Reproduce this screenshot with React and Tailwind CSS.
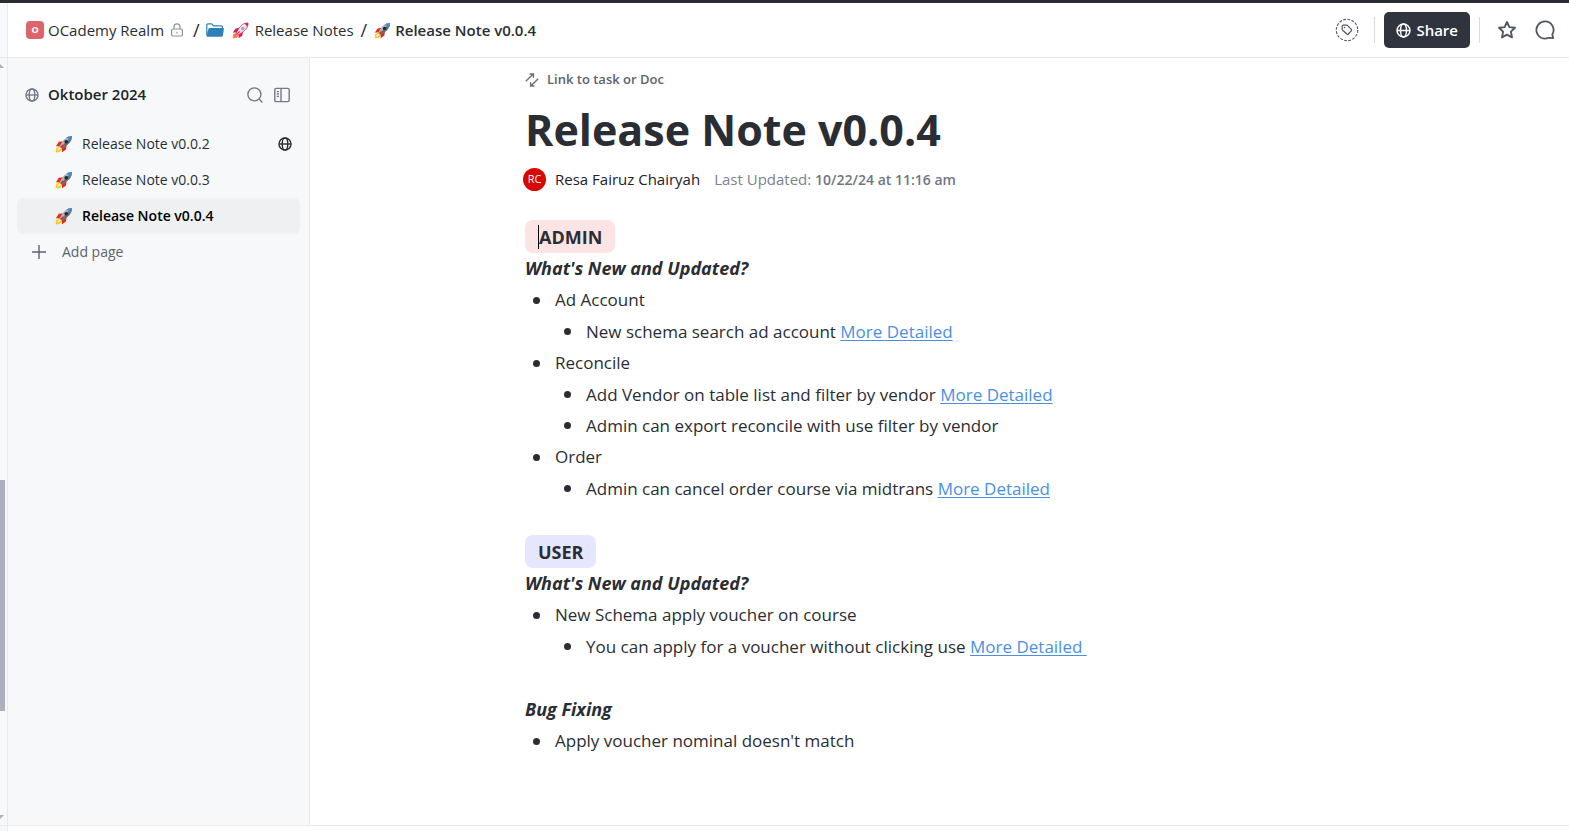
function Rocket({ className, variant = 'silver' }) {
  const pink = variant === 'pink';
  const body = pink ? '#f6eef3' : '#aeb6c1';
  const shade = pink ? '#f0a3b5' : '#4d545f';
  const nose = pink ? '#d3154b' : '#4a8ac8';
  const fin = pink ? '#dc1c50' : '#e62a18';
  return (
    <svg viewBox="0 0 18 18" className={className} aria-hidden="true">
      <path d="M5.6 10.6 1.2 13 .6 17.4 5 16.9 8 12.8Z" fill={pink ? '#f58a63' : '#fbc531'} />
      <path d="M4.8 12.2 2.6 13.8 2.4 15.8 4.6 15.2 6 13.4Z" fill={pink ? '#ff6a4d' : '#fff0a0'} />
      <path d="M8 6.2 3.8 6.8 .9 11.2 5.2 11.2Z" fill={fin} />
      <path d="M11.6 10 11 14.4 7 17.2 7 12.6Z" fill={fin} />
      <path d="M16.9 1.1C12.8.9 9.3 3.3 6.7 7.6L4.6 11.2 6.8 13.4 10.4 11.3C14.7 8.7 17.1 5.2 16.9 1.1Z" fill={body} stroke={pink ? '#d3154b' : 'none'} strokeWidth=".8" />
      <path d="M16.9 1.1C17.1 5.2 14.7 8.7 10.4 11.3L6.8 13.4 5.7 12.3Z" fill={shade} opacity={pink ? '.4' : '.75'} />
      <path
        d={pink ? 'M17 1C15.6 1 14.4 1.2 13.3 1.7L16.3 4.7C16.8 3.6 17 2.4 17 1Z' : 'M16.9 1.1C15 1 13.3 1.5 11.7 2.5L15.5 6.3C16.5 4.7 17 3 16.9 1.1Z'}
        fill={nose}
      />
      <circle cx="11.2" cy="6.8" r="1.8" fill={pink ? '#7fb4dc' : '#20242b'} />
      <path d="M7.6 9.6 5.2 11.8 6.2 12.8 8.4 10.4Z" fill={fin} />
    </svg>
  );
}

function Globe({ className }) {
  return (
    <svg viewBox="0 0 16 16" className={className} fill="none" stroke="currentColor" strokeWidth="1.6" aria-hidden="true">
      <circle cx="8" cy="8" r="6.9" />
      <ellipse cx="8" cy="8" rx="3.2" ry="6.9" />
      <path d="M1.3 8h13.4" />
    </svg>
  );
}

function Folder() {
  return (
    <svg viewBox="0 0 18 14" className="h-[14px] w-[18px]" aria-hidden="true">
      <path d="M.8 12V1.8Q.8.8 1.8.8H5.6L7.4 2.8H15.2Q16.4 2.8 16.4 4V5" fill="none" stroke="#2f80b9" strokeWidth="1.2" />
      <path d="M3.6 5H17.2Q18 5 17.9 5.8L16.9 12.6Q16.7 13.8 15.5 13.8H1.6Q.4 13.8.6 12.6L2.4 6Q2.6 5 3.6 5Z" fill="#2f80b9" />
    </svg>
  );
}

function Lock() {
  return (
    <svg viewBox="0 0 14 14" className="size-[14px]" fill="none" stroke="#8b919c" strokeWidth="1.2" aria-label="Private">
      <rect x="1.6" y="6" width="10.8" height="7" rx="1.2" />
      <path d="M4 6V3.8a3 3 0 0 1 6 0V6" />
      <path d="M7 8.8v1.6" />
    </svg>
  );
}

function Tag() {
  return (
    <svg viewBox="0 0 24 24" className="size-6" fill="none" stroke="#4f5762" aria-hidden="true">
      <circle cx="12" cy="12" r="10.7" strokeWidth="1.1" strokeDasharray="2.8 1.4" />
      <path d="M7.2 8.2Q7.2 7.2 8.2 7.2H11.6Q12.2 7.2 12.6 7.6L16.3 11.4Q17 12.1 16.3 12.8L13.3 16Q12.6 16.7 11.9 16L7.6 12.2Q7.2 11.8 7.2 11.2Z" strokeWidth="1.2" />
      <circle cx="9.5" cy="9.5" r=".5" fill="#4f5762" strokeWidth=".6" />
    </svg>
  );
}

function Star() {
  return (
    <svg viewBox="0 0 20 20" className="size-5" fill="none" stroke="#4f5762" strokeWidth="1.9" strokeLinejoin="round" aria-hidden="true">
      <path d="M10 2 12.4 7.1 18 7.8 13.9 11.6 15 17.4 10 14.6 5 17.4 6.1 11.6 2 7.8 7.6 7.1Z" />
    </svg>
  );
}

function Chat() {
  return (
    <svg viewBox="0 0 20 20" className="size-5" fill="none" stroke="#4f5762" strokeWidth="1.8" strokeLinejoin="round" aria-hidden="true">
      <path d="M10 1.4A8.6 8.6 0 1 0 13.6 17.8L18.2 18.2 17.3 14.5A8.6 8.6 0 0 0 10 1.4Z" />
    </svg>
  );
}

function Search() {
  return (
    <svg viewBox="0 0 16 16" className="size-4" fill="none" stroke="currentColor" strokeWidth="1.4" aria-hidden="true">
      <circle cx="7.4" cy="7.4" r="6.5" />
      <path d="M12 12 15.4 15.4" />
    </svg>
  );
}

function Panel() {
  return (
    <svg viewBox="0 0 16 16" className="size-4" fill="none" stroke="currentColor" strokeWidth="1.4" aria-hidden="true">
      <rect x=".8" y="1.4" width="14.4" height="13.2" rx="1.4" />
      <path d="M7 1.4v13.2M2.8 4.6h2.2M2.8 7h2.2M2.8 9.4h2.2" />
    </svg>
  );
}

function LinkArrows() {
  return (
    <svg viewBox="0 0 14 14" className="size-[14px]" fill="none" stroke="#656f7d" strokeWidth="1.4" aria-hidden="true">
      <path d="M.8 8.2 8.2.9M4.6 1H8.4V4.8M13.2 5.8 5.8 13.1M5.6 9.2V13H9.4" />
    </svg>
  );
}

function More({ children = 'More Detailed' }) {
  return <a href="#details" className="whitespace-pre text-[#4a90e2] underline underline-offset-2">{children}</a>;
}

function Item({ children, nested }) {
  return (
    <li>
      <div className={nested ? 'flex items-center leading-[31px]' : 'flex items-center leading-8'}>
        <span className="mx-2 size-[7px] shrink-0 rounded-full bg-[#2a2e34]" />
        <span className="pl-[7px]">{children}</span>
      </div>
    </li>
  );
}

function Nested({ children }) {
  return <ul className="pl-[31px]">{children}</ul>;
}

function Subheading({ children }) {
  return <h3 className="text-lg leading-[31px] font-bold italic">{children}</h3>;
}

const pages = [
  { name: 'Release Note v0.0.2', shared: true },
  { name: 'Release Note v0.0.3' },
  { name: 'Release Note v0.0.4', active: true },
];

export default function App() {
  return (
    <div className="flex h-screen flex-col overflow-hidden border-t-[3px] border-[#2a2d34] bg-white font-['Open_Sans',sans-serif] text-[#2a2e34]">
      <div className="flex min-h-0 flex-1">
        <div className="flex w-2 shrink-0 flex-col border-r border-[#e8eaed] bg-[#f7f8fa]">
          <div className="h-[55px] border-b border-[#e8eaed]" />
          <svg viewBox="0 0 4 4" className="mt-1.5 size-1" aria-hidden="true"><path d="M0 0 4 4H0Z" fill="#a9b0bb" /></svg>
          <div className="flex-[413]" />
          <div className="w-[5px] flex-[232] bg-[#abb2bd]" />
          <div className="flex-[104]" />
          <svg viewBox="0 0 4 4" className="mb-1.5 size-1" aria-hidden="true"><path d="M0 4 4 0H0Z" fill="#a9b0bb" /></svg>
          <div className="h-1.5 border-t border-[#e8eaed]" />
        </div>

        <div className="flex min-w-0 flex-1 flex-col">
          <header className="flex h-[55px] shrink-0 items-center border-b border-[#e8eaed] pr-[14px] pl-[18px] text-[15px]">
            <nav aria-label="Breadcrumb" className="flex items-center">
              <a href="#realm" className="flex items-center">
                <span className="flex size-[18px] items-center justify-center rounded bg-[#dd646a] text-[9px] font-bold text-white">O</span>
                <span className="pl-1">OCademy Realm</span>
              </a>
              <span className="px-1.5"><Lock /></span>
              <span className="px-[3px] text-lg leading-5">/</span>
              <a href="#notes" className="flex items-center pl-[3px]">
                <Folder />
                <Rocket variant="pink" className="ml-2 size-[17px]" />
                <span className="pl-1.5">Release Notes</span>
              </a>
              <span className="px-[7px] text-lg leading-5">/</span>
              <a href="#note" className="flex items-center">
                <Rocket className="size-[17px]" />
                <span className="pl-1 font-semibold">Release Note v0.0.4</span>
              </a>
            </nav>
            <div className="ml-auto flex items-center">
              <button aria-label="Tags"><Tag /></button>
              <span className="mr-[9px] ml-[15px] h-[26px] w-px bg-[#d6d9de]" />
              <button className="flex h-9 items-center gap-[5px] rounded-[5px] bg-[#30343f] px-3 font-semibold text-white">
                <Globe className="size-[15px]" />
                Share
              </button>
              <span className="ml-[9px] h-[26px] w-px bg-[#d6d9de]" />
              <button aria-label="Favorite" className="ml-[17px]"><Star /></button>
              <button aria-label="Comments" className="ml-[18px]"><Chat /></button>
            </div>
          </header>

          <div className="flex min-h-0 flex-1">
            <aside className="w-[302px] shrink-0 border-r border-[#e8eaed] bg-[#f7f8fa] px-[9px] pt-[23px] text-sm">
              <div className="flex h-7 items-center pr-[10px] pl-2 text-[#73798a]">
                <Globe className="size-[14px]" />
                <h2 className="pl-[9px] text-[15px] font-semibold text-[#202328]">Oktober 2024</h2>
                <button aria-label="Search" className="ml-auto"><Search /></button>
                <button aria-label="Toggle sidebar" className="ml-[11px]"><Panel /></button>
              </div>
              <ul className="pt-[17px]">
                {pages.map((p) => (
                  <li key={p.name}>
                    <a
                      href="#page"
                      className={p.active
                        ? 'flex h-9 items-center rounded-md bg-[#eff0f2] pr-2 pl-[38px] font-semibold text-black'
                        : 'flex h-9 items-center pr-2 pl-[38px]'}
                    >
                      <Rocket className="size-[18px]" />
                      <span className="flex-1 pl-[9px]">{p.name}</span>
                      {p.shared && <Globe className="size-[14px]" />}
                    </a>
                  </li>
                ))}
              </ul>
              <button className="flex h-9 items-center pl-[15px] text-[#5c636e]">
                <svg viewBox="0 0 14 14" className="size-[14px]" stroke="currentColor" strokeWidth="1.4" aria-hidden="true"><path d="M7 0v14M0 7h14" /></svg>
                <span className="pl-4">Add page</span>
              </button>
            </aside>

            <main className="min-w-0 flex-1 pl-px">
              <article className="mx-auto max-w-[830px] pt-[11px] text-[17px]">
                <button className="flex h-[22px] items-center text-[13px] font-semibold text-[#5c636e]">
                  <LinkArrows />
                  <span className="pl-2">Link to task or Doc</span>
                </button>
                <h1 className="pt-[11px] text-[43px] leading-[56px] font-bold">Release Note v0.0.4</h1>
                <div className="mt-[9px] -ml-0.5 flex h-6 items-center text-[15px]">
                  <span className="flex size-[23px] shrink-0 items-center justify-center rounded-full bg-[#d60800] text-[11px] text-white">RC</span>
                  <span className="pl-[9px] font-medium text-[#202328]">Resa Fairuz Chairyah</span>
                  <span className="pl-[14px] text-[#7c828d]">Last Updated: <span className="text-sm font-semibold text-[#6f7683]">10/22/24 at 11:16 am</span></span>
                </div>

                <section className="pt-[29px]">
                  <h2 className="flex h-[33px] w-fit items-center rounded-lg bg-[#fbe4e3] px-[13px] text-lg font-bold">
                    <span className="h-6 w-px bg-black" />ADMIN
                  </h2>
                  <Subheading>What's New and Updated?</Subheading>
                  <ul>
                    <Item>Ad Account</Item>
                    <Nested><Item nested>New schema search ad account <More /></Item></Nested>
                    <Item>Reconcile</Item>
                    <Nested>
                      <Item nested>Add Vendor on table list and filter by vendor <More /></Item>
                      <Item nested>Admin can export reconcile with use filter by vendor</Item>
                    </Nested>
                    <Item>Order</Item>
                    <Nested><Item nested>Admin can cancel order course via midtrans <More /></Item></Nested>
                  </ul>
                </section>

                <section className="pt-[31px]">
                  <h2 className="flex h-[33px] w-fit items-center rounded-lg bg-[#e4e7ff] px-[13px] text-lg font-bold">USER</h2>
                  <Subheading>What's New and Updated?</Subheading>
                  <ul>
                    <Item>New Schema apply voucher on course</Item>
                    <Nested><Item nested>You can apply for a voucher without clicking use <More>{'More Detailed '}</More></Item></Nested>
                  </ul>
                </section>

                <section className="pt-8">
                  <Subheading>Bug Fixing</Subheading>
                  <ul><Item>Apply voucher nominal doesn't match</Item></ul>
                </section>
              </article>
            </main>
          </div>
          <div className="h-1.5 shrink-0 border-t border-[#e8eaed]" />
        </div>
      </div>
    </div>
  );
}
